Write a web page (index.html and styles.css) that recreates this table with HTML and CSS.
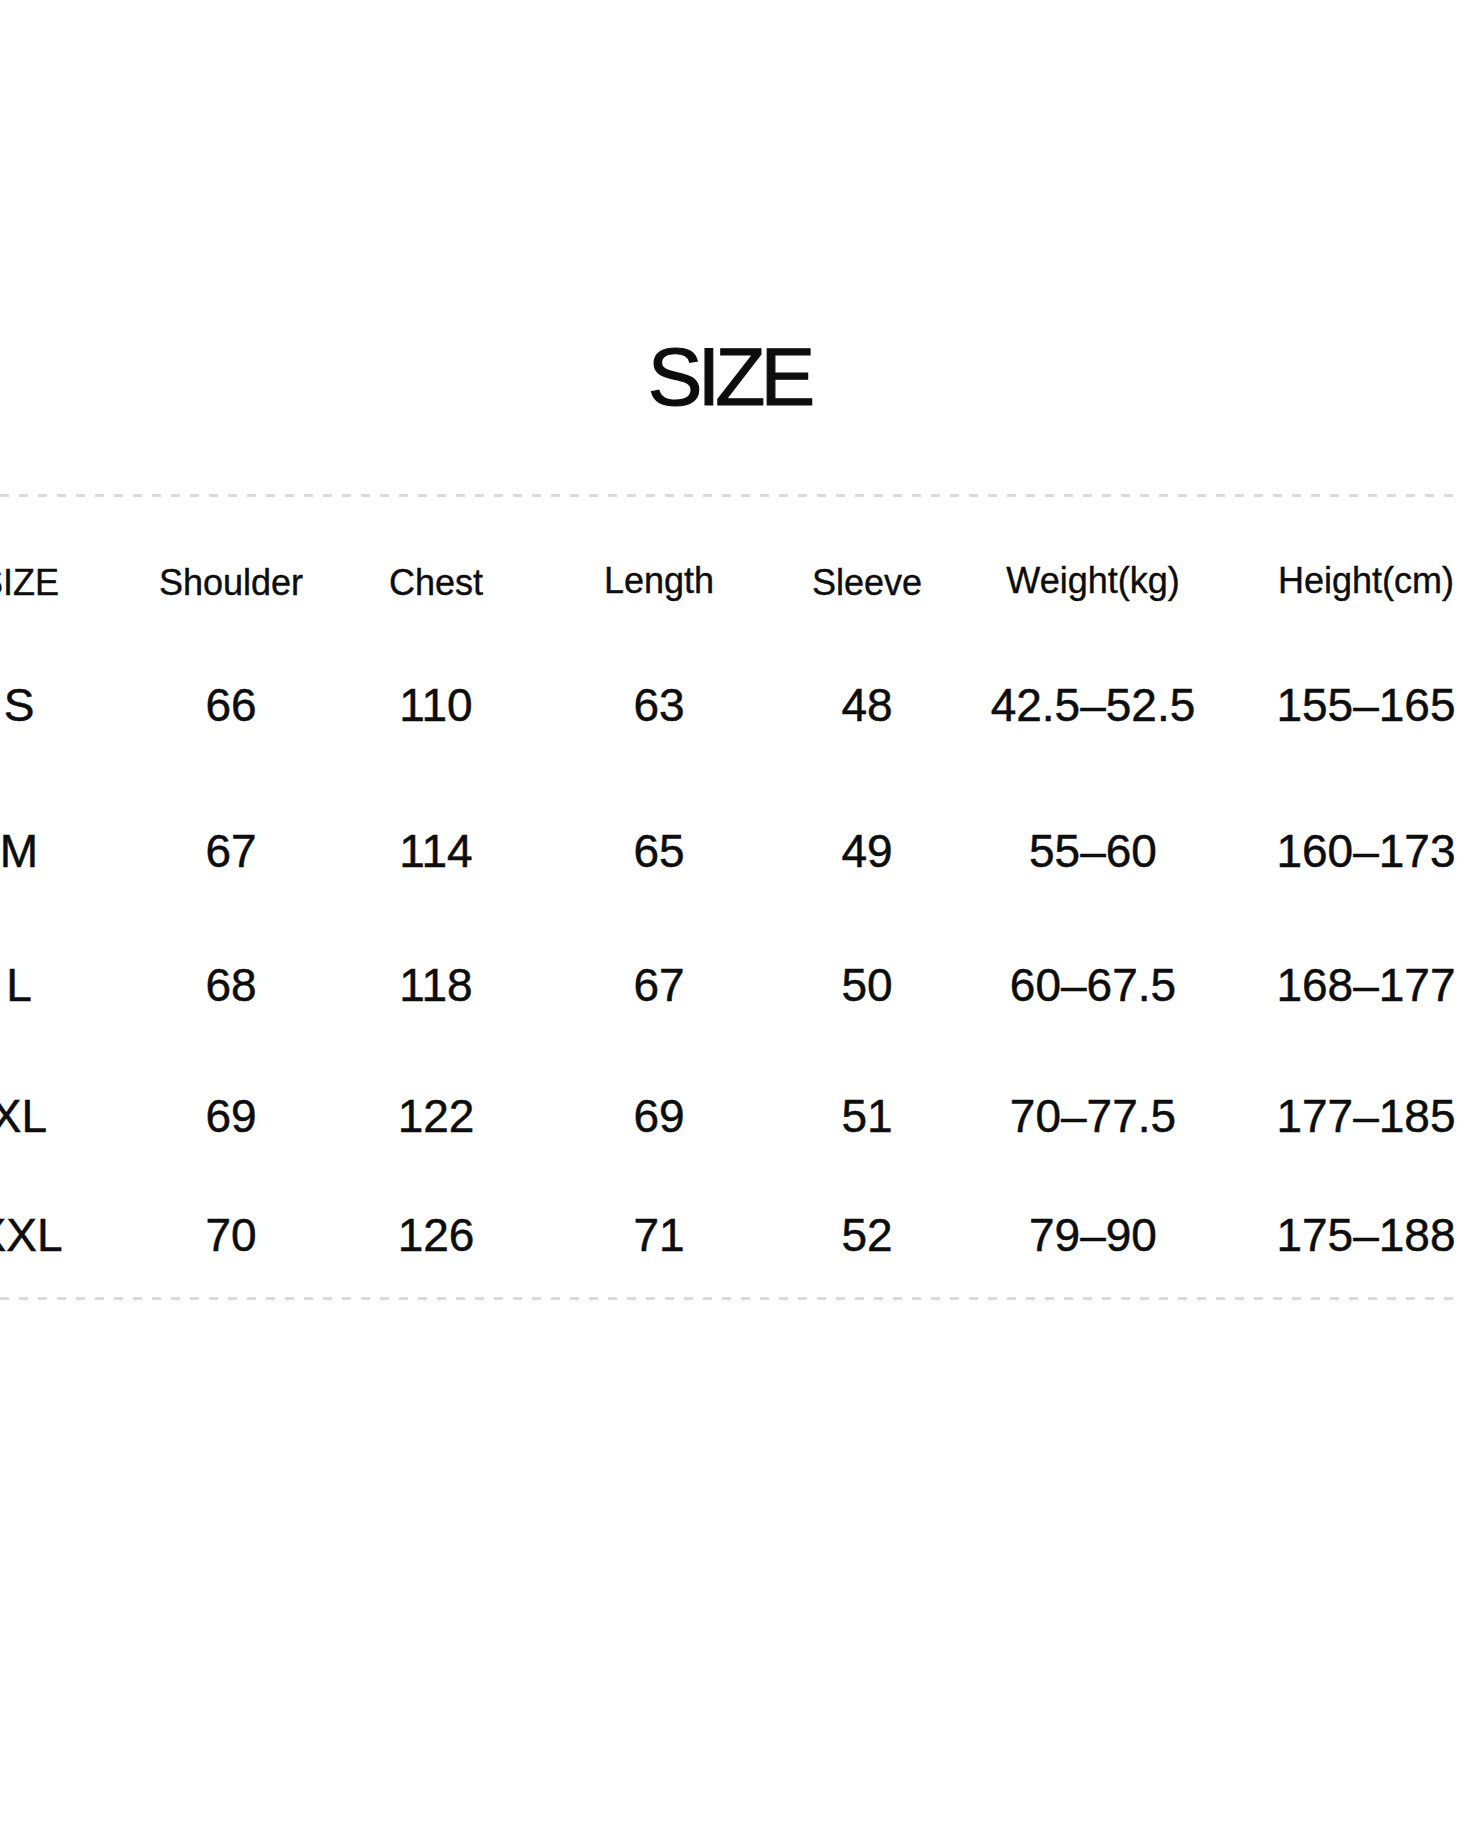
FILE: index.html
```html
<!DOCTYPE html>
<html lang="en">
<head>
<meta charset="utf-8">
<title>SIZE</title>
<link rel="stylesheet" href="styles.css">
</head>
<body>
<main class="page">
  <h1 class="title">SIZE</h1>
  <div class="rule"></div>
  <div class="table">
    <div class="row row-head">
      <div class="cell">SIZE</div>
      <div class="cell">Shoulder</div>
      <div class="cell">Chest</div>
      <div class="cell cell-up">Length</div>
      <div class="cell">Sleeve</div>
      <div class="cell cell-up">Weight(kg)</div>
      <div class="cell cell-up">Height(cm)</div>
    </div>
    <div class="row row-s">
      <div class="cell">S</div>
      <div class="cell">66</div>
      <div class="cell">110</div>
      <div class="cell">63</div>
      <div class="cell">48</div>
      <div class="cell">42.5–52.5</div>
      <div class="cell">155–165</div>
    </div>
    <div class="row row-m">
      <div class="cell">M</div>
      <div class="cell">67</div>
      <div class="cell">114</div>
      <div class="cell">65</div>
      <div class="cell">49</div>
      <div class="cell">55–60</div>
      <div class="cell">160–173</div>
    </div>
    <div class="row row-l">
      <div class="cell">L</div>
      <div class="cell">68</div>
      <div class="cell">118</div>
      <div class="cell">67</div>
      <div class="cell">50</div>
      <div class="cell">60–67.5</div>
      <div class="cell">168–177</div>
    </div>
    <div class="row row-xl">
      <div class="cell">XL</div>
      <div class="cell">69</div>
      <div class="cell">122</div>
      <div class="cell">69</div>
      <div class="cell">51</div>
      <div class="cell">70–77.5</div>
      <div class="cell">177–185</div>
    </div>
    <div class="row row-xxl">
      <div class="cell">XXL</div>
      <div class="cell">70</div>
      <div class="cell">126</div>
      <div class="cell">71</div>
      <div class="cell">52</div>
      <div class="cell">79–90</div>
      <div class="cell">175–188</div>
    </div>
  </div>
  <div class="rule"></div>
</main>
</body>
</html>
```

FILE: styles.css
```css
html, body {
  margin: 0;
  padding: 0;
  background: #ffffff;
}

body {
  width: 1460px;
  height: 1827px;
  overflow: hidden;
  font-family: "Liberation Sans", Arial, Helvetica, sans-serif;
  color: #0d0d0d;
}

.page {
  display: flex;
  flex-direction: column;
  width: 1460px;
}

.title {
  margin: 327px 0 67px 0;
  height: 100px;
  line-height: 100px;
  font-size: 82px;
  font-weight: 400;
  letter-spacing: -5px;
  text-align: center;
  padding-right: 2px;
  -webkit-text-stroke: 1.2px #0d0d0d;
}

.rule {
  height: 3px;
  width: 1460px;
  background: repeating-linear-gradient(
    to right,
    #dadada 0px,
    #dadada 9px,
    transparent 9px,
    transparent 19px
  );
}

.table {
  display: flex;
  flex-direction: column;
  padding-top: 46px;
  padding-bottom: 4px;
  margin-left: -96px;
}

.row {
  display: grid;
  grid-template-columns: 230px 194px 216px 230px 186px 266px 280px;
  font-size: 46px;
  -webkit-text-stroke: 0.5px #0d0d0d;
}

.cell {
  display: flex;
  align-items: center;
  justify-content: center;
  white-space: nowrap;
}

.row-head {
  height: 80px;
  font-size: 36px;
  -webkit-text-stroke: 0.4px #0d0d0d;
}

.cell-up {
  padding-bottom: 5px;
}

.row-s { height: 164px; }
.row-m { height: 128px; }
.row-l { height: 140px; }
.row-xl { height: 122px; }
.row-xxl { height: 116px; }
```
